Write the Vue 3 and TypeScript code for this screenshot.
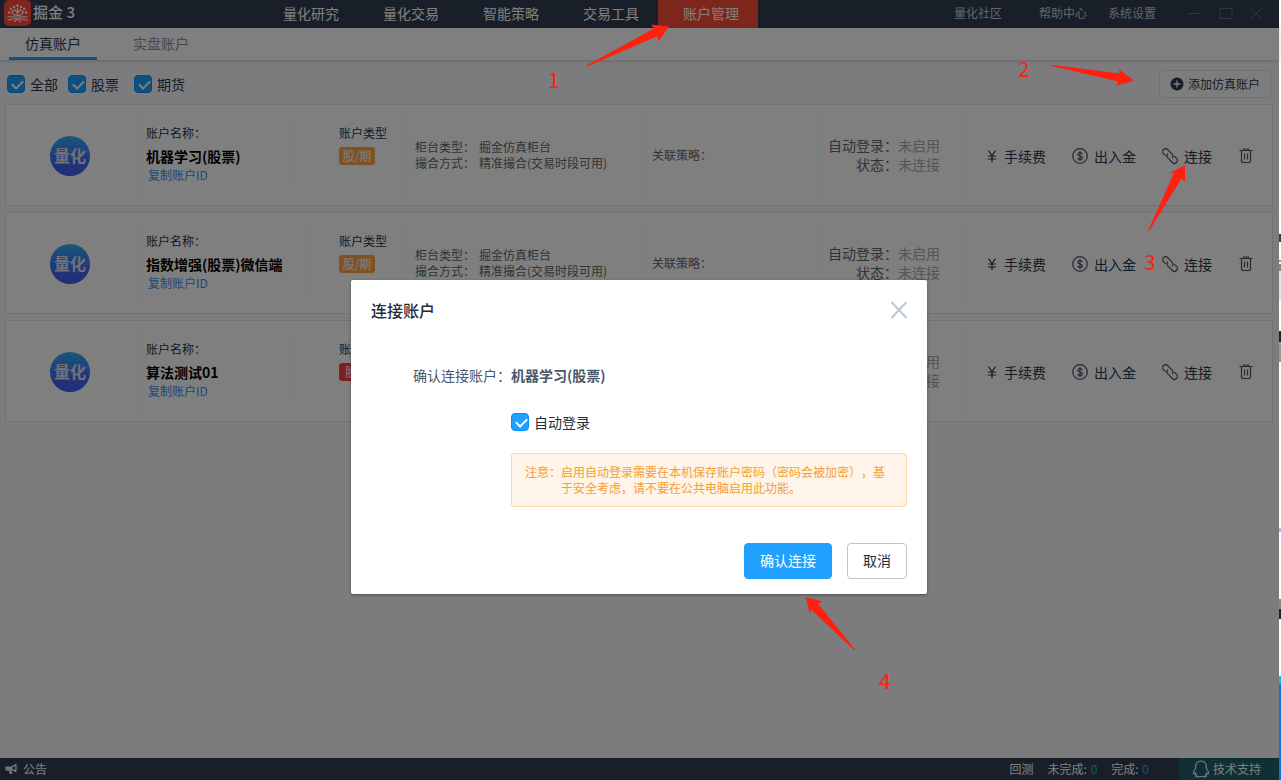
<script setup lang="ts">
import { ref } from 'vue'

interface Account {
  name: string
  kind: string
  tone: 'orange' | 'red'
}

const navItems: string[] = ['量化研究', '量化交易', '智能策略', '交易工具', '账户管理']
const activeNav = ref('账户管理')
const tabs: string[] = ['仿真账户', '实盘账户']
const activeTab = ref('仿真账户')

const all = ref(true)
const stock = ref(true)
const futures = ref(true)
const autoLogin = ref(true)
const dialogOpen = ref(true)

const accounts: Account[] = [
  { name: '机器学习(股票)', kind: '股/期', tone: 'orange' },
  { name: '指数增强(股票)微信端', kind: '股/期', tone: 'orange' },
  { name: '算法测试01', kind: '股票', tone: 'red' },
]
const selected = ref<Account>(accounts[0])

function connect(account: Account): void {
  selected.value = account
  dialogOpen.value = true
}
</script>

<template>
  <div class="screen">
    <div class="app">
      <header class="topbar">
        <div class="brand">
          <svg class="logo" width="27" height="26" viewBox="0 0 27 26" aria-hidden="true">
            <rect width="27" height="26" rx="5" fill="#ff4a36" />
            <g stroke="#fff" fill="none" stroke-width="1.2" stroke-linecap="round">
              <path d="M13.500 8v7M13.500 13 10.500 9.500M13.500 13l3-3.500M12.500 15.500Q9 15 7.500 12M14.500 15.500q3.500-.5 5-3.500" />
              <path d="M12.500 15.500q0 4-8.500 4.500M14.500 15.500q0 4 8.500 4.500M13.500 18.500 10.500 21.500M13.500 18.500l3 3M4 16.500q3 1.300 6 0M23 16.500q-3 1.300-6 0" />
            </g>
            <g fill="#fff">
              <circle cx="13.500" cy="5.500" r="1.300" /><circle cx="10" cy="7" r="1.200" /><circle cx="17" cy="7" r="1.200" />
              <circle cx="6.800" cy="8.800" r="1.200" /><circle cx="20.200" cy="8.800" r="1.200" />
              <circle cx="5" cy="12.500" r="1.200" /><circle cx="22" cy="12.500" r="1.200" />
              <circle cx="9" cy="11" r="1" /><circle cx="18" cy="11" r="1" />
            </g>
          </svg>
          <span class="brand-name">掘金 3</span>
        </div>
        <nav class="nav">
          <a v-for="item in navItems" :key="item" href="#" :class="{ active: item === activeNav }" @click.prevent="activeNav = item">{{ item }}</a>
        </nav>
        <div class="links">
          <a href="#" class="community">量化社区</a>
          <a href="#" class="help">帮助中心</a>
          <a href="#">系统设置</a>
        </div>
        <div class="window-buttons">
          <button type="button" aria-label="最小化"><svg width="14" height="14" viewBox="0 0 14 14"><path d="M0.500 6.500h13" /></svg></button>
          <button type="button" aria-label="最大化"><svg width="14" height="14" viewBox="0 0 14 14"><rect x="1" y="1.500" width="12" height="10" rx="1" /></svg></button>
          <button type="button" aria-label="关闭"><svg width="14" height="14" viewBox="0 0 14 14"><path d="M1.500 1.500l10 10M11.500 1.500l-10 10" /></svg></button>
        </div>
      </header>

      <div class="tabs">
        <button v-for="tab in tabs" :key="tab" type="button" :class="{ current: tab === activeTab }" @click="activeTab = tab">{{ tab }}</button>
      </div>

      <div class="toolbar">
        <label class="check"><input v-model="all" type="checkbox" />全部</label>
        <div class="filters">
          <label class="check"><input v-model="stock" type="checkbox" />股票</label>
          <label class="check"><input v-model="futures" type="checkbox" />期货</label>
        </div>
        <button type="button" class="add">
          <svg width="14" height="14" viewBox="0 0 14 14" aria-hidden="true"><circle cx="7" cy="7" r="6.500" fill="#28384c" /><path d="M7 3.500v7M3.500 7h7" stroke="#fff" stroke-width="1.300" /></svg>
          添加仿真账户
        </button>
      </div>

      <main class="list">
        <article v-for="account in accounts" :key="account.name" class="card">
          <div class="cell avatar-cell"><div class="avatar">量化</div></div>
          <div class="cell identity">
            <div class="name-block">
              <div class="caption">账户名称：</div>
              <div class="name">{{ account.name }}</div>
              <a href="#" class="copy">复制账户ID</a>
            </div>
            <div class="type-block">
              <div class="caption">账户类型</div>
              <span class="tag" :class="account.tone">{{ account.kind }}</span>
            </div>
          </div>
          <div class="cell counter">
            <div><span>柜台类型：</span>掘金仿真柜台</div>
            <div><span>撮合方式：</span>精准撮合(交易时段可用)</div>
          </div>
          <div class="cell strategy">关联策略：</div>
          <div class="cell status">
            <span>自动登录：</span><em>未启用</em>
            <span>状态：</span><em>未连接</em>
          </div>
          <div class="actions">
            <button type="button" class="fee">
              <svg width="10" height="14" viewBox="0 0 10 14" aria-hidden="true"><path d="M1.500 1.500 5 6.500l3.500-5M5 6.500v6.500M1 7h8M1 10h8" /></svg>手续费
            </button>
            <button type="button" class="cash">
              <svg width="16" height="16" viewBox="0 0 16 16" aria-hidden="true"><circle cx="8" cy="8" r="7.300" /><path d="M10.300 6Q10 4.700 8 4.700T5.800 6.300Q5.800 7.600 8 8t2.300 1.700Q10.300 11.300 8 11.300T5.700 10M8 3v10" /></svg>出入金
            </button>
            <button type="button" class="link" @click="connect(account)">
              <svg width="18" height="18" viewBox="0 0 18 18" aria-hidden="true"><g transform="rotate(45 9 9)"><path d="M6 11.900H2.700a2.900 2.900 0 0 1 0-5.800h6.500a2.900 2.900 0 0 1 2.800 3M12 6.100h3.300a2.900 2.900 0 0 1 0 5.800H8.800a2.900 2.900 0 0 1-2.800-3" /></g></svg>连接
            </button>
            <button type="button" class="trash" aria-label="删除">
              <svg width="14" height="16" viewBox="0 0 14 16" aria-hidden="true"><path d="M0.500 2.500h13M4.500 2.500V1h5v1.500M2.500 2.500V12.500q0 2 2 2h5q2 0 2-2V2.500M5.500 5.500v6M8.500 5.500v6" /></svg>
            </button>
          </div>
        </article>
      </main>

      <footer class="statusbar">
        <a href="#" class="notice">
          <svg width="14" height="12" viewBox="0 0 14 12" aria-hidden="true"><path d="M0.500 3.500h5.500L11.500 0.500v9L6.500 7.300l.8 3.700H4.800L3.700 7.500H.5zM12.300 3.500q1.600 1.500 0 3" fill="#e8eaee" /><path d="M10.200 3v4L7.500 6V4.200z" fill="#303f50" /></svg>公告
        </a>
        <div class="progress">
          <span>回测</span>
          <span>未完成: <b class="todo">0</b></span>
          <span>完成: <b class="done">0</b></span>
        </div>
        <a href="#" class="support">
          <svg width="18" height="18" viewBox="0 0 18 18" aria-hidden="true"><path d="M3.700 8Q3.300 1 9 1t5.300 7q2.500 3.500 2.200 5.700-.8.800-1.800-.7-.5 1.300-1.400 2.100 1.200.4 1.200 1.200-2.500 1.200-5.500 0-3 1.200-5.500 0 0-.8 1.200-1.200-.9-.8-1.400-2.100-1 1.500-1.800.7Q1.200 11.500 3.700 8z" fill="none" stroke="#fff" stroke-width="1.100" /></svg>技术支持
        </a>
      </footer>

      <div v-if="dialogOpen" class="mask">
        <section class="dialog" role="dialog" aria-modal="true" aria-labelledby="dialog-title">
          <div class="dialog-head">
            <h2 id="dialog-title">连接账户</h2>
            <button type="button" class="close" aria-label="关闭" @click="dialogOpen = false">
              <svg width="18" height="18" viewBox="0 0 18 18"><path d="M1.500 1l15 16M16.500 1l-15 16" fill="none" stroke="#bfcbd9" stroke-width="2.200" /></svg>
            </button>
          </div>
          <div class="dialog-body">
            <span class="field">确认连接账户：</span>
            <strong>{{ selected.name }}</strong>
            <label class="check auto"><input v-model="autoLogin" type="checkbox" />自动登录</label>
            <div class="warning">
              <span>注意：</span>
              <p>启用自动登录需要在本机保存账户密码（密码会被加密），基于安全考虑，请不要在公共电脑启用此功能。</p>
            </div>
          </div>
          <div class="dialog-foot">
            <button type="button" class="primary">确认连接</button>
            <button type="button" class="plain" @click="dialogOpen = false">取消</button>
          </div>
        </section>
      </div>
    </div>
    <div class="edge"></div>

    <svg class="marks" width="1281" height="780" viewBox="0 0 1281 780">
      <path d="M587 65.300 654 28.500 651 24.500 669 26.500 658.500 41.500 657.500 36 588 66.200z" />
      <path d="M1052 64.800 1119.500 73.500 1119 69.200 1134 80.500 1116 86 1118 81.500 1052 66z" />
      <path d="M1148 230.800 1174 173 1169 173.500 1185 165 1185 182 1181.500 178.500 1149 231z" />
      <path d="M806 597 822.500 601.500 818 603.500 855 649.500 854 650 811 609.500 809.500 613.500z" />
      <text x="548" y="88">1</text>
      <text x="1018" y="77">2</text>
      <text x="1144" y="270">3</text>
      <text x="879" y="689">4</text>
    </svg>
  </div>
</template>

<style>
body {
  margin: 0;
}
</style>

<style scoped>
.screen {
  position: relative;
  display: flex;
  min-height: 100vh;
  overflow: hidden;
  font-family: "Noto Sans CJK SC", "Noto Sans", sans-serif;
  font-size: 14px;
  color: #28384c;
}
.screen * {
  box-sizing: border-box;
}
button {
  border: 0;
  padding: 0;
  background: none;
  font: inherit;
  color: inherit;
  cursor: pointer;
}
a {
  color: inherit;
  text-decoration: none;
}
.app {
  position: relative;
  flex: 1;
  min-width: 0;
  display: flex;
  flex-direction: column;
  background: #f8f9fc;
}
.topbar {
  display: flex;
  align-items: center;
  height: 28px;
  background: #303f50;
  color: #fff;
  padding-right: 15px;
}
.brand {
  display: flex;
  align-items: center;
  gap: 2px;
  width: 258px;
  height: 28px;
  padding: 0 0 2px 4px;
}
.brand-name {
  font-size: 15px;
  font-weight: 500;
  line-height: 20px;
  padding-bottom: 2px;
}
.nav {
  display: flex;
}
.nav a {
  width: 100px;
  height: 28px;
  line-height: 26px;
  padding-left: 25px;
}
.nav .active {
  background: #fb4d39;
}
.links {
  display: flex;
  margin-left: auto;
  font-size: 12px;
  line-height: 26px;
  height: 28px;
  color: #c6cbd2;
}
.community {
  margin-right: 37px;
}
.help {
  margin-right: 21px;
}
.window-buttons {
  display: flex;
  gap: 17px;
  margin-left: 32px;
}
.window-buttons button {
  display: flex;
}
.window-buttons svg {
  fill: none;
  stroke: #65707c;
  stroke-width: 1;
}
.tabs {
  position: relative;
  display: flex;
  gap: 20px;
  height: 32px;
  padding-left: 9px;
  background: #fff;
  box-shadow: 0 1px 4px rgba(0, 0, 0, 0.2);
}
.tabs button {
  padding: 0 16px;
  line-height: 26px;
  color: #8c939d;
  border-bottom: 3px solid transparent;
  border-top: 1px solid transparent;
}
.tabs .current {
  color: #28384c;
  border-bottom-color: #20a0ff;
}
.toolbar {
  display: flex;
  align-items: center;
  gap: 10px;
  padding: 10px 8px 6px 7px;
}
.filters {
  display: flex;
  gap: 15px;
}
.check {
  display: flex;
  align-items: center;
  gap: 5px;
  line-height: 20px;
}
.check input {
  appearance: none;
  position: relative;
  width: 18px;
  height: 18px;
  margin: 0;
  border: 1px solid #0190fe;
  border-radius: 4px;
  background: #fff;
}
.check input:checked {
  background: #20a0ff;
}
.check input:checked::after {
  content: "";
  position: absolute;
  left: 6px;
  top: 2px;
  width: 5px;
  height: 9px;
  border: solid #fff;
  border-width: 0 2px 2px 0;
  transform: rotate(45deg);
}
.add {
  display: flex;
  align-items: center;
  justify-content: center;
  gap: 4px;
  width: 112px;
  height: 28px;
  margin-left: auto;
  border: 1px solid #dfe3ea;
  border-radius: 4px;
  background: #fbfbfd;
  font-size: 12px;
  line-height: 16px;
}
.list {
  flex: 1;
  display: flex;
  flex-direction: column;
  gap: 6px;
  padding: 0 6px 0 5px;
}
.card {
  display: grid;
  grid-template-columns: 132fr 270fr 236fr 176fr 146fr 306fr;
  align-items: center;
  height: 102px;
  border: 1px solid #e0e6ed;
  background: #fff;
}
.cell {
  height: 80px;
  border-right: 1px solid #f7f7f7;
}
.avatar-cell {
  display: flex;
  align-items: center;
  padding: 2px 0 0 44px;
}
.avatar {
  width: 40px;
  height: 40px;
  border-radius: 50%;
  background: linear-gradient(#30aef5, #4468f5 65%, #405cf0);
  color: #dfe2ee;
  font-size: 16px;
  font-weight: 700;
  line-height: 38px;
  text-align: center;
}
.identity {
  display: flex;
  padding: 6px 20px 0 8px;
}
.name-block {
  min-width: 147px;
  height: 64px;
  padding-right: 28px;
  border-right: 1px solid #f7f7f7;
}
.type-block {
  margin-left: auto;
}
.caption {
  font-size: 12px;
  line-height: 24px;
}
.name {
  font-weight: 700;
  color: #000;
  line-height: 22px;
}
.copy {
  display: block;
  padding-left: 2px;
  font-size: 12px;
  line-height: 16px;
  color: #2f94f0;
}
.tag {
  display: block;
  width: 36px;
  margin-top: 2px;
  border-radius: 3px;
  color: #fff;
  font-size: 12px;
  line-height: 18px;
  text-align: center;
}
.orange {
  background: #ffa54a;
}
.red {
  background: #ff3c44;
}
.counter {
  display: flex;
  flex-direction: column;
  justify-content: center;
  padding-left: 7px;
  font-size: 12px;
  line-height: 16px;
  color: #666;
}
.counter span {
  margin-right: 4px;
}
.strategy {
  display: flex;
  align-items: center;
  padding-left: 8px;
  font-size: 12px;
  line-height: 16px;
  color: #666;
}
.status {
  display: grid;
  grid-template-columns: max-content max-content;
  align-content: center;
  padding-left: 8px;
  line-height: 19px;
  color: #666;
  text-align: right;
}
.status em {
  font-style: normal;
  color: #aaa;
}
.actions {
  display: flex;
  align-items: center;
  justify-content: flex-end;
  padding: 1px 19px 0 0;
}
.actions button {
  display: flex;
  align-items: center;
  gap: 6px;
  line-height: 20px;
}
.actions svg {
  fill: none;
  stroke: #4a5666;
  stroke-width: 1.2;
}
.actions .fee {
  gap: 7px;
}
.actions .fee svg {
  stroke: #28384c;
}
.cash {
  margin-left: 26px;
}
.link {
  margin-left: 25px;
}
.actions .link {
  gap: 5px;
}
.trash {
  margin-left: 27px;
}
.statusbar {
  display: flex;
  align-items: center;
  height: 22px;
  background: #303f50;
  color: #fff;
  font-size: 12px;
  line-height: 18px;
}
.notice {
  display: flex;
  align-items: center;
  gap: 4px;
  padding-left: 5px;
}
.progress {
  display: flex;
  gap: 14px;
  margin-left: auto;
  padding-right: 30px;
}
.progress b {
  font-weight: 400;
  margin-left: 1px;
}
.todo {
  color: #13ce66;
}
.done {
  color: #20a0ff;
}
.support {
  display: flex;
  align-items: center;
  gap: 3px;
  width: 100px;
  height: 22px;
  padding-left: 13px;
  background: #22606a;
}
.mask {
  position: absolute;
  inset: 0;
  display: flex;
  align-items: flex-start;
  justify-content: center;
  padding: 280px 1px 0 0;
  background: rgba(0, 0, 0, 0.5);
}
.dialog {
  width: 576px;
  padding: 20px 20px 15px;
  border-radius: 2px;
  background: #fff;
  box-shadow: 0 1px 3px rgba(0, 0, 0, 0.35);
}
.dialog-head {
  display: flex;
  align-items: center;
  justify-content: space-between;
}
.dialog-head h2 {
  margin: 0;
  font-size: 16px;
  font-weight: 500;
  line-height: 20px;
  color: #1f2d3d;
}
.close {
  display: flex;
  margin-right: -1px;
}
.dialog-body {
  display: grid;
  grid-template-columns: 140px 1fr;
  padding-top: 45px;
  line-height: 20px;
}
.field {
  text-align: right;
  color: #48576a;
}
.dialog-body strong {
  color: #48576a;
}
.auto {
  grid-column: 2;
  margin-top: 27px;
  color: #1f2d3d;
}
.warning {
  grid-column: 2;
  display: flex;
  margin-top: 21px;
  padding: 10px 16px 10px 13px;
  border: 1px solid #fbd9a8;
  border-radius: 3px;
  background: #fef4e9;
  color: #f5a033;
  font-size: 12px;
  line-height: 16px;
  text-spacing-trim: space-all;
}
.warning span {
  flex: none;
}
.warning p {
  margin: 0;
}
.dialog-foot {
  display: flex;
  justify-content: flex-end;
  gap: 15px;
  margin-top: 36px;
}
.dialog-foot button {
  height: 36px;
  padding: 0 15px 2px;
  border: 1px solid #c4c4c4;
  border-radius: 4px;
  color: #1f2d3d;
}
.dialog-foot .primary {
  border-color: #20a0ff;
  background: #20a0ff;
  color: #fff;
}
/* Sliver of the desktop visible beyond the window's right border */
.edge {
  width: 2px;
  background: linear-gradient(
    #fff 234px, #2c3e50 234px 242px, #fff 242px 260px, #999 260px 262px, #fff 262px 264px,
    #888 264px 271px, #dfe2e8 271px 300px, #fff 300px 331px, #1c252f 331px 342px, #999 342px 362px,
    #fff 362px 528px, #b9b5ea 528px 532px, #fff 532px 599px, #888 599px 609px, #1c252f 609px 619px,
    #fff 619px 676px, #20b0f0 676px 684px, #0878d8 684px
  );
}
.marks {
  position: absolute;
  left: 0;
  top: 0;
  pointer-events: none;
  fill: #ff2010;
  font-size: 21px;
}
</style>
